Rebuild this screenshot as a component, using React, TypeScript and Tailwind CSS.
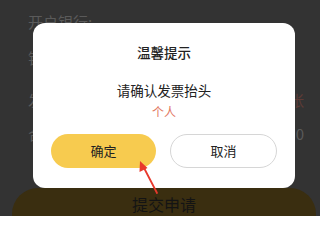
import React from "react";

const font = { fontFamily: '"Noto Sans CJK SC", "Noto Sans", sans-serif' };

function BackgroundForm() {
  return (
    <div className="relative h-[216px] w-[320px] overflow-hidden bg-[#333333]">
      <div className="flex flex-col pl-[28px] pr-[16px] pt-[12px] text-[15px] leading-[20px] text-[#5a5a5a]">
        <div className="h-[20px]">开户银行:</div>
        <div className="mt-[16px] h-[20px]">银行账号</div>
        <div className="mt-[22px] flex h-[20px] justify-between">
          <span>发票类型</span>
          <span className="text-[#5e3b36]">张</span>
        </div>
        <div className="mt-[14px] flex h-[20px] justify-between">
          <span>合计金额</span>
          <span>0</span>
        </div>
      </div>
      <div className="absolute left-[12px] right-[4px] top-[188px] flex h-[56px] justify-center rounded-[26px] bg-[#3a2e10] pt-[4px] text-[16px] leading-[24px] text-[#141414]">
        提交申请
      </div>
    </div>
  );
}

export default function App() {
  return (
    <div className="relative h-[216px] w-[320px] overflow-hidden" style={font}>
      <BackgroundForm />
      <div className="absolute left-[33px] top-[23px] flex h-[165px] w-[262px] flex-col items-center rounded-[12px] bg-white px-[18px]">
        <div className="mt-[19px] text-[13.5px] font-medium leading-[20px] text-[#222]">温馨提示</div>
        <div className="mt-[17px] text-[13.5px] leading-[22px] text-[#222]">请确认发票抬头</div>
        <div className="mt-[1px] text-[12px] leading-[20px] text-[#e27762]">个人</div>
        <div className="mt-[12px] flex w-full gap-[14px]">
          <button className="h-[34px] flex-1 rounded-full bg-[#f7cb4f] text-[13px] text-[#222]">确定</button>
          <button className="h-[34px] flex-1 rounded-full border border-[#d6d6d6] bg-white text-[13px] text-[#222]">取消</button>
        </div>
      </div>
      <svg className="absolute left-0 top-0" width="320" height="216" viewBox="0 0 320 216">
        <line x1="157" y1="193" x2="143" y2="166" stroke="#e8392c" strokeWidth="1.8" strokeLinecap="round" />
        <polygon points="140,161 139.5,172 147.5,168" fill="#e8392c" />
      </svg>
    </div>
  );
}
